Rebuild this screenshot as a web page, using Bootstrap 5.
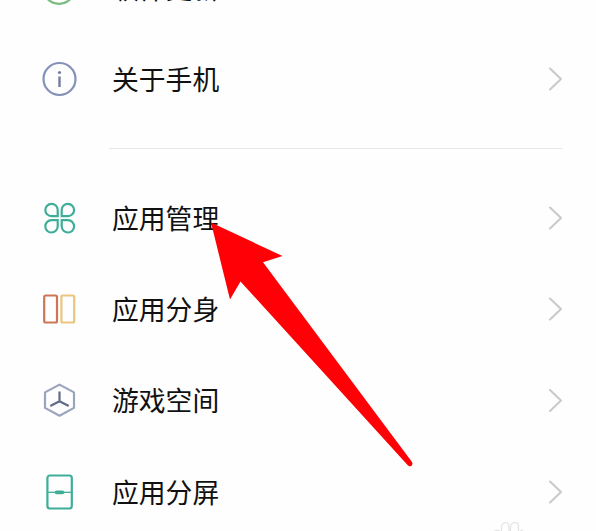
<!DOCTYPE html>
<html lang="zh-CN">
<head>
<meta charset="utf-8">
<meta name="viewport" content="width=device-width, initial-scale=1">
<title>设置</title>
<link href="https://cdn.jsdelivr.net/npm/bootstrap@5.3.0/dist/css/bootstrap.min.css" rel="stylesheet">
<style>
body{background:#fefefe;font-family:"Noto Sans CJK SC",sans-serif;color:#111}
.screen{width:596px;height:531px}
.settings{margin-top:-58px}
.setting{height:91.3px;padding-left:41px;padding-right:33px}
.setting-icon{width:36px;height:36px;margin-right:35px;fill:none;stroke-width:2.2}
.setting-label{font-size:26.8px;line-height:40px;white-space:nowrap}
.chevron{width:16px;height:24px;fill:none;stroke:#cacaca;stroke-width:2.1;stroke-linecap:round;stroke-linejoin:round}
.divider{height:47.4px;padding:0 34px 0 109px}
.divider hr{border-top:1px solid #e6e6e6;opacity:1}
.pointer{pointer-events:none}
</style>
<script src="https://cdn.jsdelivr.net/npm/bootstrap@5.3.0/dist/js/bootstrap.bundle.min.js"></script>
</head>
<body>
<main class="screen position-relative overflow-hidden">
<div class="settings d-flex flex-column">
<div class="setting d-flex align-items-center flex-shrink-0">
<svg class="setting-icon" viewBox="0 0 36 36" stroke="#79bd80"><circle cx="18" cy="17.8" r="16"/></svg>
<span class="setting-label">软件更新</span>
<svg class="chevron ms-auto" viewBox="0 0 16 24"><path d="M3 1.5 14 12 3 22.5"/></svg>
</div>
<div class="setting d-flex align-items-center flex-shrink-0">
<svg class="setting-icon" viewBox="0 0 36 36" stroke="#8592b8"><circle cx="18.5" cy="18" r="16"/><circle cx="18.5" cy="11.5" r="1.6" fill="#747b9b" stroke="none"/><path d="M18.5 15.5V26" stroke="#747b9b" stroke-width="2.4"/></svg>
<span class="setting-label">关于手机</span>
<svg class="chevron ms-auto" viewBox="0 0 16 24"><path d="M3 1.5 14 12 3 22.5"/></svg>
</div>
<div class="divider d-flex align-items-center flex-shrink-0"><hr class="w-100 m-0"></div>
<div class="setting d-flex align-items-center flex-shrink-0">
<svg class="setting-icon" viewBox="0 0 36 36" stroke="#3eae98"><path d="M16.7 16.2V9.8A6.2 6.2 0 1 0 10.4 16.2ZM20.7 16.2V9.8A6.2 6.2 0 1 1 27 16.2ZM16.7 20.1V26.5A6.2 6.2 0 1 1 10.4 20.1ZM20.7 20.1V26.5A6.2 6.2 0 1 0 27 20.1Z"/></svg>
<span class="setting-label">应用管理</span>
<svg class="chevron ms-auto" viewBox="0 0 16 24"><path d="M3 1.5 14 12 3 22.5"/></svg>
</div>
<div class="setting d-flex align-items-center flex-shrink-0">
<svg class="setting-icon" viewBox="0 0 36 36"><rect x="3.2" y="4.5" width="12.8" height="27" rx="1.5" stroke="#cb7656"/><rect x="20.4" y="4.5" width="12.8" height="27" rx="1.5" stroke="#e9c57e"/></svg>
<span class="setting-label">应用分身</span>
<svg class="chevron ms-auto" viewBox="0 0 16 24"><path d="M3 1.5 14 12 3 22.5"/></svg>
</div>
<div class="setting d-flex align-items-center flex-shrink-0">
<svg class="setting-icon" viewBox="0 0 36 36" stroke="#9ba4bd" stroke-linejoin="round"><path d="M18.5 2.600 33 10.400V25.900L18.500 33.700 4 25.900V10.400Z"/><path d="M18.500 9.400V19.200M9.300 24 18.500 19.200 27.700 24" stroke="#626b87"/></svg>
<span class="setting-label">游戏空间</span>
<svg class="chevron ms-auto" viewBox="0 0 16 24"><path d="M3 2 14 12.500 3 23"/></svg>
</div>
<div class="setting d-flex align-items-center flex-shrink-0">
<svg class="setting-icon" viewBox="0 0 36 36" stroke="#3eae98"><rect x="6.400" y="1.500" width="24.400" height="33" rx="2.500"/><path d="M7 18.300H30.500" stroke-width="1.300"/><path d="M15.600 18.300H21.400" stroke-width="3.800" stroke-linecap="round"/></svg>
<span class="setting-label">应用分屏</span>
<svg class="chevron ms-auto" viewBox="0 0 16 24"><path d="M3 1.5 14 12 3 22.5"/></svg>
</div>
</div>
<svg class="pointer position-absolute top-0 start-0" width="596" height="531" viewBox="0 0 596 531">
<path d="M211 222.5 282.5 256 263 262.3 412 462Q413.500 465.500 410 466.500L408 465.500 240.500 281.500 230 299.500Z" fill="#ff0006"/>
<g fill="none" stroke="#e3e3e3" stroke-width="1.2"><path d="M501.500 534V527Q502 522.500 505.500 522.500T509 527V531M510.500 531V527Q511.500 522.500 515 522.500T518.500 527V534M494 532Q496 529.500 500 531M520 531 523 530"/></g>
</svg>
</main>
</body>
</html>
